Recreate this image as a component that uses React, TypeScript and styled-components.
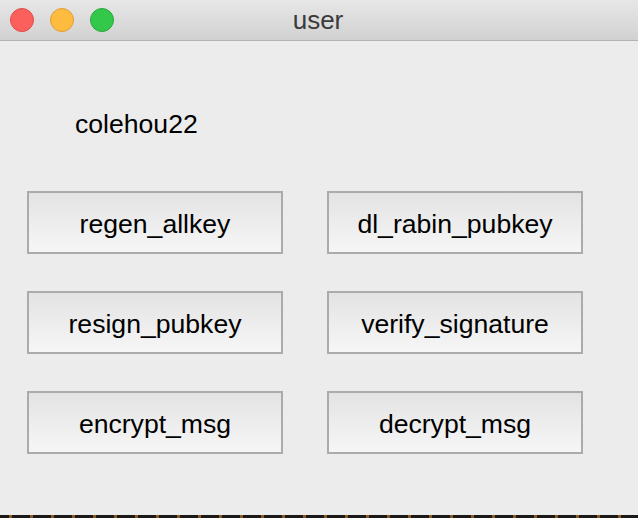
import React from "react";
import styled, { createGlobalStyle } from "styled-components";

const Global = createGlobalStyle`
  html, body { margin: 0; padding: 0; background: #1b1917; }
  body { font-family: "Liberation Sans", Arial, sans-serif; }
`;

const Window = styled.div`
  width: 638px;
  height: 515px;
  display: flex;
  flex-direction: column;
  background: #ececec;
`;

const TitleBar = styled.div`
  height: 40px;
  flex: none;
  position: relative;
  display: flex;
  align-items: center;
  justify-content: center;
  background: linear-gradient(#e8e7e8, #d2d1d2);
  border-bottom: 1px solid #b3b3b3;
`;

const Lights = styled.div`
  position: absolute;
  left: 10px;
  top: 8px;
  display: flex;
  gap: 16px;
`;

const Light = styled.span<{ $fill: string; $edge: string }>`
  width: 22px;
  height: 22px;
  border-radius: 50%;
  background: ${(p) => p.$fill};
  border: 1px solid ${(p) => p.$edge};
`;

const Title = styled.div`
  font-size: 26px;
  line-height: 30px;
  color: #3a3a3a;
  margin-left: -2px;
`;

const Content = styled.div`
  flex: 1;
  display: flex;
  flex-direction: column;
  padding: 68px 0 0 27px;
`;

const UserLabel = styled.div`
  font-size: 26.6px;
  line-height: 30px;
  color: #000;
  padding-left: 48px;
`;

const ButtonGrid = styled.div`
  margin-top: 52px;
  display: grid;
  grid-template-columns: 256px 256px;
  grid-auto-rows: 63px;
  column-gap: 44px;
  row-gap: 37px;
`;

const ActionButton = styled.button`
  box-sizing: border-box;
  border: 2px solid #ababab;
  background: linear-gradient(#e3e3e3, #f6f6f6);
  font-family: "Liberation Sans", Arial, sans-serif;
  font-size: 26.6px;
  color: #000;
  padding: 3px 0 0;
  border-radius: 0;
  display: flex;
  align-items: center;
  justify-content: center;
`;

const Desktop = styled.div`
  height: 3px;
  background: repeating-linear-gradient(
    90deg,
    #1b1917 0px,
    #1b1917 9px,
    #8a5a22 9px,
    #8a5a22 12px,
    #1b1917 12px,
    #1b1917 21px
  );
`;

const buttons = [
  "regen_allkey",
  "dl_rabin_pubkey",
  "resign_pubkey",
  "verify_signature",
  "encrypt_msg",
  "decrypt_msg",
];

export default function App() {
  return (
    <>
      <Global />
      <Window>
        <TitleBar>
          <Lights>
            <Light $fill="#fc605c" $edge="#df4b46" />
            <Light $fill="#fdbc40" $edge="#de9f34" />
            <Light $fill="#34c84a" $edge="#27a83a" />
          </Lights>
          <Title>user</Title>
        </TitleBar>
        <Content>
          <UserLabel>colehou22</UserLabel>
          <ButtonGrid>
            {buttons.map((b) => (
              <ActionButton key={b}>{b}</ActionButton>
            ))}
          </ButtonGrid>
        </Content>
      </Window>
      <Desktop />
    </>
  );
}
